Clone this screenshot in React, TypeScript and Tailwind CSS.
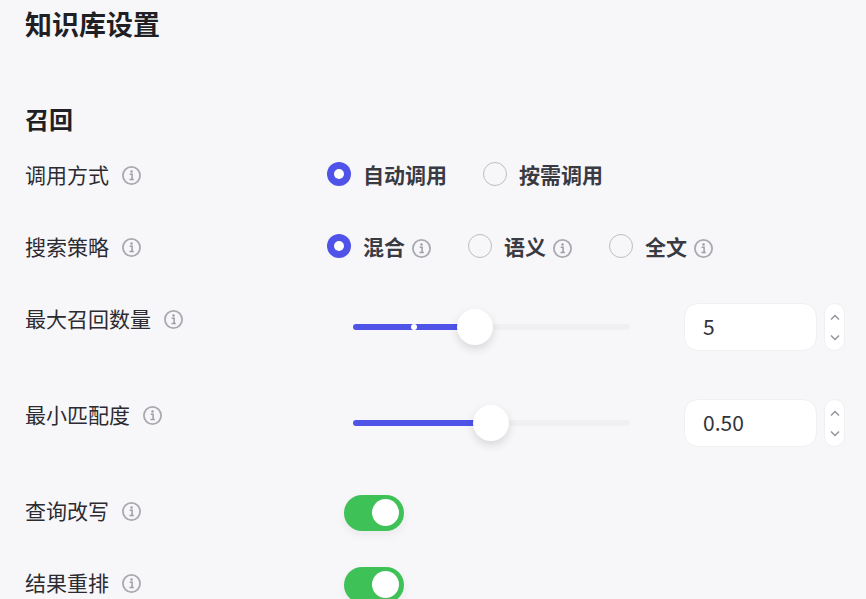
import { ReactNode } from 'react';

const FONT = '[font-family:"Noto_Sans_CJK_SC","Noto_Sans",sans-serif]';

function InfoIcon({ className = '' }: { className?: string }) {
    return (
        <svg width="19" height="19" viewBox="0 0 19 19" fill="none" className={`shrink-0 ${className}`}>
            <circle cx="9.5" cy="9.5" r="8.6" stroke="#a9a9b2" strokeWidth="1.8" />
            <circle cx="9.5" cy="5.6" r="1.25" fill="#9d9da6" />
            <path d="M7.7 8.3H10.1V13.2M7.5 13.6H11.8" stroke="#9d9da6" strokeWidth="1.5" />
        </svg>
    );
}

function Radio({ checked = false }: { checked?: boolean }) {
    return checked ? (
        <span className="flex h-6 w-6 items-center justify-center rounded-full bg-[#4f53e8]">
            <span className="h-2.5 w-2.5 rounded-full bg-white" />
        </span>
    ) : (
        <span className="block h-6 w-6 rounded-full border border-[#bdbdc2] bg-[#f7f7fa]" />
    );
}

function RadioOption({ label, checked, info, className = '' }: { label: string; checked?: boolean; info?: boolean; className?: string }) {
    return (
        <div className={`flex items-center ${className}`}>
            <div className="-mt-1 shrink-0"><Radio checked={checked} /></div>
            <span className="ml-3 mr-px -mt-0.5 text-[21px] font-semibold text-[#3a3a42]">{label}</span>
            {info && <InfoIcon className="ml-1.5" />}
        </div>
    );
}

function Row({ label, children, tall }: { label: string; children: ReactNode; tall?: boolean }) {
    return (
        <div className={`flex ${tall ? 'h-[96px]' : 'h-[72px]'}`}>
            <div className="flex h-[70px] w-[302px] shrink-0 items-center gap-[13px]">
                <span className="text-[21px] text-[#2b2b31]">{label}</span>
                <InfoIcon />
            </div>
            {children}
        </div>
    );
}

function NumberSlider({ value, percent, dot }: { value: string; percent: number; dot?: boolean }) {
    return (
        <div className="flex h-12 mt-[19px] items-center">
            <div className="relative ml-[26px] h-1.5 w-[277px] rounded-full bg-[#f0f0f2]">
                <div className="h-full rounded-full bg-[#4f53e8]" style={{ width: `${percent}%` }} />
                {dot && <span className="absolute left-[58px] top-0 h-1.5 w-1.5 rounded-full bg-white" />}
                <span
                    className="absolute top-1/2 h-9 w-9 -translate-x-1/2 -translate-y-1/2 rounded-full bg-white shadow-[0_4px_10px_rgba(0,0,0,0.13)]"
                    style={{ left: `${percent}%` }}
                />
            </div>
            <div className="ml-[54px] flex h-12 w-[133px] items-center rounded-[14px] border border-[#f0f0f2] bg-white pb-px pl-[18px] text-[21px] text-[#33333b]">
                {value}
            </div>
            <div className="ml-[7px] flex h-12 w-[21px] flex-col items-center justify-between rounded-[11px] border border-[#f0f0f2] bg-white pb-[9px] pt-[10px]">
                <svg width="10" height="7" viewBox="0 0 10 7" fill="none"><path d="M1 5.5L5 1.5L9 5.5" stroke="#93939a" strokeWidth="1.5" /></svg>
                <svg width="10" height="7" viewBox="0 0 10 7" fill="none"><path d="M1 1.5L5 5.5L9 1.5" stroke="#93939a" strokeWidth="1.5" /></svg>
            </div>
        </div>
    );
}

function Toggle() {
    return (
        <div className="ml-[17px] mt-[19px] flex h-9 w-[60px] items-center justify-end rounded-full bg-[#3ec156] pr-[5px] shadow-[0_4px_10px_rgba(0,0,0,0.06)]">
            <span className="-mt-0.5 h-[27px] w-[27px] rounded-full bg-white" />
        </div>
    );
}

export default function App() {
    return (
        <div className={`h-[599px] overflow-hidden bg-[#f7f7fa] pl-[25px] ${FONT}`}>
            <h1 className="flex h-12 items-center text-[27px] font-semibold text-[#1f1f24]">知识库设置</h1>
            <h2 className="mt-[52px] flex h-10 items-center pb-0.5 text-[24px] font-semibold text-[#1f1f24]">召回</h2>
            <Row label="调用方式">
                <div className="flex items-center">
                    <RadioOption label="自动调用" checked />
                    <RadioOption label="按需调用" className="ml-[35px]" />
                </div>
            </Row>
            <Row label="搜索策略">
                <div className="flex items-center">
                    <RadioOption label="混合" checked info />
                    <RadioOption label="语义" info className="ml-[37px]" />
                    <RadioOption label="全文" info className="ml-[37px]" />
                </div>
            </Row>
            <Row label="最大召回数量" tall>
                <NumberSlider value="5" percent={44} dot />
            </Row>
            <Row label="最小匹配度" tall>
                <NumberSlider value="0.50" percent={49.8} />
            </Row>
            <Row label="查询改写"><Toggle /></Row>
            <Row label="结果重排"><Toggle /></Row>
        </div>
    );
}
